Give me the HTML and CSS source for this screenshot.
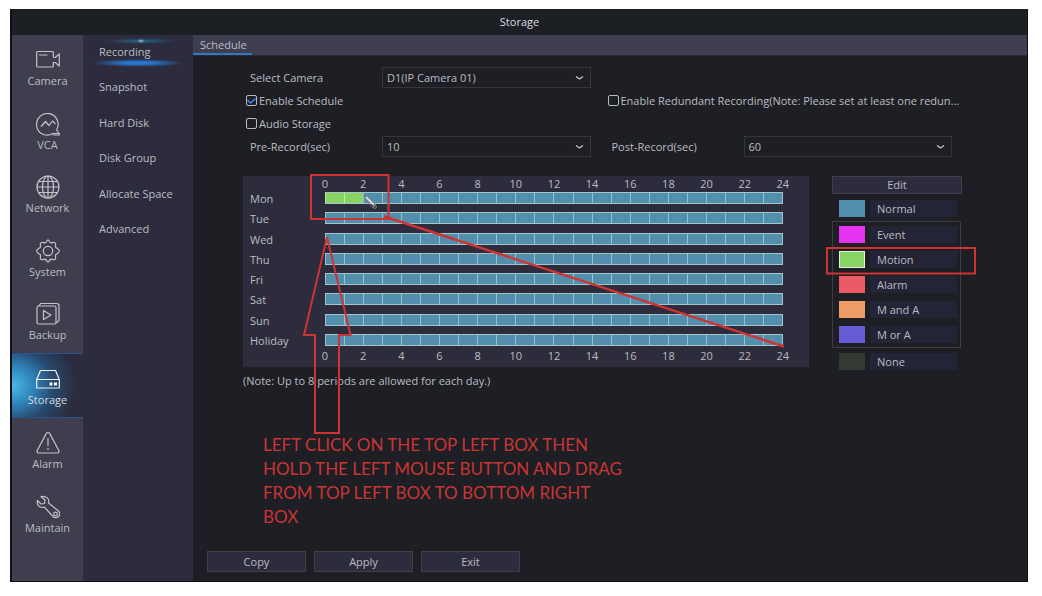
FILE: index.html
```html
<!DOCTYPE html>
<html lang="en">
<head>
<meta charset="utf-8">
<title>Storage</title>
<link rel="stylesheet" href="styles.css">
</head>
<body>
<div class="window">
  <header class="titlebar">Storage</header>

  <nav class="nav">
    <a class="nav-item" href="#camera">
      <svg class="icon" viewBox="0 0 24 24"><path d="M17.300 9V4.500a1 1 0 0 0-1-1H1.700a1 1 0 0 0-1 1V18a1 1 0 0 0 1 1h14.600a1 1 0 0 0 1-1v-4M3 7h8.500M17.300 9.500h2L23.300 6v12l-4-3.500h-2"/></svg>
      Camera</a>
    <a class="nav-item" href="#vca">
      <svg class="icon" viewBox="0 0 24 24"><path d="M20.500 18A10.800 10.800 0 1 0 17 21.500h6.300v1.500h-6.500M20.500 18l2.500 3.500M5 14.500l4.500-5 3.500 4 3.500-4.500 3 3"/></svg>
      VCA</a>
    <a class="nav-item" href="#network">
      <svg class="icon" viewBox="0 0 24 24"><circle cx="12" cy="12" r="11"/><ellipse cx="12" cy="12" rx="5.500" ry="11"/><path d="M12 1v22M1 12h22M3 6.500h18M3 17.500h18"/></svg>
      Network</a>
    <a class="nav-item" href="#system">
      <svg class="icon" viewBox="0 0 24 24"><path d="M12 .800c1 0 1.500 2.700 2.600 3.100s3-1.400 4.400-.3.100 3.100.600 4.400 3.700 1.800 3.700 4-3.200 2.700-3.700 4 .800 3.300-.6 4.400-3.300-.7-4.400-.3-1.600 3.100-2.600 3.100-1.500-2.700-2.600-3.100-3 1.400-4.400.3-.1-3.100-.6-4.400S.700 14.200.700 12s3.200-2.700 3.700-4-.8-3.300.6-4.400 3.300.7 4.400.3S11 .800 12 .800z"/><circle cx="12" cy="12" r="4.700"/></svg>
      System</a>
    <a class="nav-item" href="#backup">
      <svg class="icon" viewBox="0 0 24 24"><rect x="1" y="4" width="19" height="18" rx="1.500"/><path d="M3 4l1.500-2.500H21.500L23 3v15.500L20 21M7.500 8.500v9l7.500-4.500z"/></svg>
      Backup</a>
    <a class="nav-item nav-item-active" href="#storage" aria-current="page">
      <svg class="icon" viewBox="0 0 24 24"><path d="M.700 12.500L4.500 3.500h15l3.800 9V21H.700zM.700 12.500h22.600"/><path class="fill" d="M13.500 15.500h3v3h-3zM18 15.500h3v3h-3z"/></svg>
      Storage</a>
    <a class="nav-item" href="#alarm">
      <svg class="icon" viewBox="0 0 24 24"><path d="M12 1.500c.8 0 1.400.4 1.800 1.100l9 16.900c.6 1.300 0 2.500-1.500 2.500H2.700c-1.500 0-2.100-1.200-1.500-2.500l9-16.900c.4-.7 1-1.100 1.800-1.100zM12 7v8M12 17v2"/></svg>
      Alarm</a>
    <a class="nav-item" href="#maintain">
      <svg class="icon" viewBox="0 0 24 24"><path d="M5 1.500l4 3.500-.5 3.500L5 9 1.500 5.500C.500 9 2.500 12.500 6.500 12.500l2-.3 8.500 9.300a3.800 3.800 0 0 0 5.500-5.500L12.500 8C14 4 10 .500 5 1.500z"/><circle cx="19.500" cy="19" r="1.800"/></svg>
      Maintain</a>
  </nav>

  <nav class="subnav">
    <div class="subnav-list">
      <a class="subnav-item subnav-item-active" href="#recording">Recording</a>
      <a class="subnav-item" href="#snapshot">Snapshot</a>
      <a class="subnav-item" href="#disk">Hard Disk</a>
      <a class="subnav-item" href="#group">Disk Group</a>
      <a class="subnav-item" href="#space">Allocate Space</a>
      <a class="subnav-item" href="#advanced">Advanced</a>
    </div>
  </nav>

  <main class="main">
    <div class="tabs"><a class="tab" href="#schedule">Schedule</a></div>

    <div class="content">
      <form class="form">
        <div class="field">
          <label class="field-label" for="camera">Select Camera</label>
          <select class="select" id="camera"><option>D1(IP Camera 01)</option></select>
        </div>
        <label class="check check-first"><input class="box" type="checkbox" checked><span class="check-text">Enable Schedule</span></label>
        <label class="check"><input class="box" type="checkbox"><span class="check-text">Enable Redundant Recording(Note: Please set at least one redun...</span></label>
        <label class="check check-first"><input class="box" type="checkbox"><span class="check-text">Audio Storage</span></label>
        <div class="field field-first">
          <label class="field-label" for="pre">Pre-Record(sec)</label>
          <select class="select" id="pre"><option>10</option></select>
        </div>
        <div class="field">
          <label class="field-label" for="post">Post-Record(sec)</label>
          <select class="select" id="post"><option>60</option></select>
        </div>
      </form>

      <div class="planner">
        <section class="schedule">
          <div class="scale"></div>
          <div class="days"></div>
          <div class="scale scale-bottom"></div>
        </section>
        <aside class="legend">
          <button class="edit" type="button">Edit</button>
          <button class="kind" type="button"><span class="swatch normal"></span><span class="kind-name">Normal</span></button>
          <div class="kinds">
            <button class="kind" type="button"><span class="swatch event"></span><span class="kind-name">Event</span></button>
            <button class="kind" type="button"><span class="swatch motion"></span><span class="kind-name">Motion</span></button>
            <button class="kind" type="button"><span class="swatch alarm"></span><span class="kind-name">Alarm</span></button>
            <button class="kind" type="button"><span class="swatch m-and-a"></span><span class="kind-name">M and A</span></button>
            <button class="kind" type="button"><span class="swatch m-or-a"></span><span class="kind-name">M or A</span></button>
          </div>
          <button class="kind" type="button"><span class="swatch none"></span><span class="kind-name">None</span></button>
        </aside>
      </div>

      <p class="note">(Note: Up to 8 periods are allowed for each day.)</p>
      <p class="callout">LEFT CLICK ON THE TOP LEFT BOX THEN<br>HOLD THE LEFT MOUSE BUTTON AND DRAG<br>FROM TOP LEFT BOX TO BOTTOM RIGHT<br>BOX</p>
    </div>

    <footer class="actions">
      <button class="action" type="button">Copy</button>
      <button class="action" type="button">Apply</button>
      <button class="action" type="button">Exit</button>
    </footer>
  </main>

  <svg class="marks" viewBox="10 9 1018 573" width="1018" height="573" aria-hidden="true">
    <path class="pencil-edge" d="M364 195l2 5 7 8 3-3-7-7z"/>
    <path class="pencil-body" d="M366 197l8 8"/>
    <circle class="pencil-edge" cx="375" cy="207" r="1.500"/>
    <rect x="311" y="175" width="77.500" height="44"/>
    <path class="drag" d="M384 216.500l5 1.500 395 128.500"/>
    <path d="M327 237l-23 98h11v98h24v-98h11.500z"/>
    <rect x="827" y="248" width="148" height="25.500"/>
  </svg>
</div>
<script src="script.js"></script>
</body>
</html>
```

FILE: script.js
```js
const days = ["Mon", "Tue", "Wed", "Thu", "Fri", "Sat", "Sun", "Holiday"];
const motionHours = { Mon: 2 };

document.querySelectorAll(".scale").forEach((scale) => {
  for (let hour = 0; hour <= 24; hour += 2) {
    const mark = document.createElement("span");
    mark.className = "scale-mark";
    mark.textContent = hour;
    scale.append(mark);
  }
});

const list = document.querySelector(".days");
days.forEach((day) => {
  const row = document.createElement("div");
  row.className = "day";
  const name = document.createElement("span");
  name.className = "day-name";
  name.textContent = day;
  const bar = document.createElement("div");
  bar.className = "bar";
  for (let hour = 0; hour < 24; hour += 1) {
    const cell = document.createElement("span");
    cell.className = hour < (motionHours[day] || 0) ? "cell cell-motion" : "cell";
    bar.append(cell);
  }
  row.append(name, bar);
  list.append(row);
});
```

FILE: styles.css
```css
* { box-sizing: border-box; }

body {
  margin: 0;
  min-height: 100vh;
  padding: 9px 14px 14px 10px;
  display: flex;
  background: #fff;
  color: #bcbdc1;
  font: 11px/16px "Open Sans", "Noto Sans", sans-serif;
}

a { color: inherit; text-decoration: none; }
button, select, input { font: inherit; color: inherit; margin: 0; }

.window {
  position: relative;
  flex: 1;
  min-width: 0;
  display: grid;
  grid-template-columns: 71px 110px 1fr;
  grid-template-rows: 26px 1fr;
  padding: 0 1px 1px 2px;
  background: #0e0f17;
}

.titlebar {
  grid-column: 1 / -1;
  background: #1c1f23;
  color: #dcdde0;
  line-height: 26px;
  text-align: center;
}

.nav {
  display: flex;
  flex-direction: column;
  padding-bottom: 36px;
  background: #3e3e4f;
}
.nav-item {
  flex: 1;
  display: flex;
  flex-direction: column;
  align-items: center;
  justify-content: center;
  gap: 1px;
  padding-top: 4px;
}
.nav-item-active {
  border-top: 1px solid #24578f;
  border-bottom: 1px solid #24578f;
  background: radial-gradient(ellipse 64px 56px at 0 50%, #4db9e4 0, #2f83b8 35%, #27496f 65%, #2b2c3e 100%);
  color: #d5d8de;
}
.icon {
  width: 24px;
  height: 24px;
  fill: none;
  stroke: #c3c4c8;
  stroke-width: 1.2;
  stroke-linejoin: round;
}
.nav-item-active .icon { stroke: #eef2f4; }
.icon .fill { fill: #fff; stroke: none; }

.subnav { background: #2c2c3e; }
.subnav-list { display: flex; flex-direction: column; min-height: 213px; }
.subnav-item {
  flex: 1;
  display: flex;
  align-items: center;
  padding: 0 0 2px 16px;
}
.subnav-item-active {
  background:
    radial-gradient(ellipse 4px 2px at 58px 6px, #9fb9cf, transparent),
    radial-gradient(ellipse 36px 3px at 58px 6px, #24648f, transparent),
    radial-gradient(ellipse 46px 4px at 55px 28px, #2877cf 30%, transparent);
}

.main {
  min-width: 0;
  display: flex;
  flex-direction: column;
  background: #1d1f24;
}
.tabs { display: flex; background: #3e3e50; border-bottom: 1px solid #292a35; }
.tab {
  padding: 2px 5px 0 7px;
  border-bottom: 2px solid #2f78c8;
  line-height: 16px;
}

.content { flex: 1; padding: 11px 65px 0 50px; }

.form {
  display: grid;
  grid-template-columns: 1fr 1fr;
  grid-auto-rows: 21px;
  gap: 2px 17px;
  margin: 0 10px 0 3px;
}
.field { min-width: 0; display: flex; align-items: center; }
.field-label { width: 136px; padding-left: 4px; }
.check-first, .field-first { grid-column: 1; }
.select {
  flex: 1;
  min-width: 0;
  height: 21px;
  padding: 0 16px 0 4px;
  appearance: none;
  border: 1px solid #34353d;
  border-radius: 0;
  background: no-repeat right 6px center / 9px 6px
    url("data:image/svg+xml,%3Csvg xmlns='http://www.w3.org/2000/svg' viewBox='0 0 9 6'%3E%3Cpath d='M1 1.500l3.500 2.500L8 1.500' fill='none' stroke='%23c8c9cc' stroke-width='1.300'/%3E%3C/svg%3E");
}
.check { min-width: 0; display: flex; align-items: center; gap: 2px; }
.check-text { white-space: nowrap; }
.box {
  flex: none;
  width: 11px;
  height: 11px;
  appearance: none;
  border: 1px solid #b9bbbf;
  border-radius: 2px;
}
.box:checked {
  background: center / 9px 9px
    url("data:image/svg+xml,%3Csvg xmlns='http://www.w3.org/2000/svg' viewBox='0 0 9 9'%3E%3Cpath d='M.500 4l3 3L8.500 2.500' fill='none' stroke='%232f86e0' stroke-width='1.600'/%3E%3C/svg%3E");
}

.planner {
  display: flex;
  align-items: flex-start;
  gap: 23px;
  margin-top: 19px;
}
.schedule {
  flex: 1;
  padding: 0 26px 0 7px;
  background: #2c2c3d;
}
.scale {
  display: flex;
  justify-content: space-between;
  margin-left: 75px;
}
.scale-bottom { padding: 2px 0 3px; }
.scale-mark { width: 0; display: flex; justify-content: center; }
.days {
  display: flex;
  flex-direction: column;
  justify-content: space-between;
  min-height: 154px;
}
.day { display: flex; line-height: 12px; }
.day-name { width: 75px; padding-top: 1px; height: 12px; }
.bar {
  flex: 1;
  height: 12px;
  display: grid;
  grid-template-columns: repeat(24, 1fr);
  border: solid #a5c6c9;
  border-width: 1px 1px 1px 0;
}
.cell { background: #528fac; border-left: 1px solid #94c3cb; }
.cell-motion { background: #87d465; border-color: #bfe6a8; }

.legend { width: 130px; display: flex; flex-direction: column; }
.edit, .action {
  padding: 0;
  border: 1px solid #3f4048;
  background: #2c2c3e;
}
.edit { height: 18px; line-height: 16px; margin-bottom: 6px; }
.kinds {
  display: flex;
  flex-direction: column;
  gap: 8px;
  margin: 4px 1px 5px 0;
  padding: 4px 0;
  border: 1px solid #3c3e40;
}
.kind {
  display: flex;
  gap: 5px;
  padding: 0 5px 0 7px;
  border: 0;
  background: none;
  text-align: left;
}
.kinds .kind { padding: 0 3px 0 6px; }
.swatch { width: 26px; height: 17px; }
.kind-name { flex: 1; padding-left: 7px; background: #232436; line-height: 17px; }
.normal { background: #528fac; }
.event { background: #e532f0; }
.motion { background: #87d465; border: 1px solid #e4f3da; }
.alarm { background: #ea5b65; }
.m-and-a { background: #ee9b66; }
.m-or-a { background: #655cd6; }
.none { background: #343932; }

.note { margin: 3px 0 0; }
.callout {
  margin: 44px 0 0 20px;
  color: #c93434;
  font: 17px/24px Lato, sans-serif;
}

.actions { display: flex; gap: 8px; padding: 0 14px 9px; }
.action { width: 99px; height: 21px; }

.marks {
  position: absolute;
  left: 0;
  top: 0;
  pointer-events: none;
  fill: none;
  stroke: #cf3333;
  stroke-width: 2;
}
.drag { stroke-width: 2.5; }
.pencil-body { stroke: #d7d9da; }
.pencil-edge { stroke: #77797c; stroke-width: 1; }
```
